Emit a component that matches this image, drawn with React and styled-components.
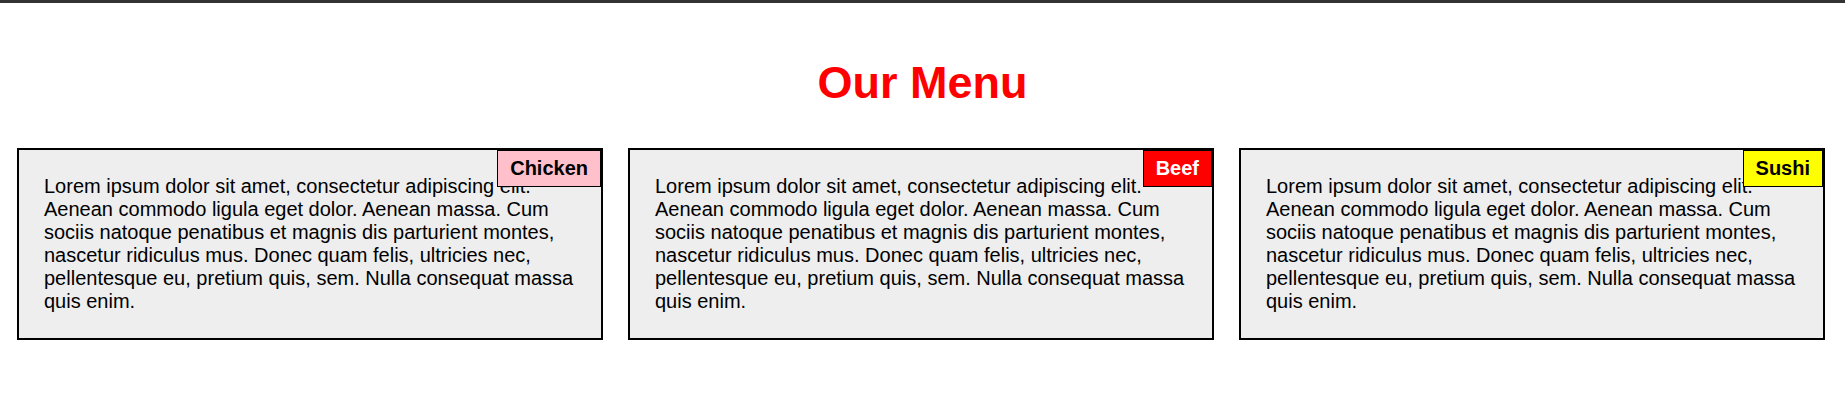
import React from "react";
import styled, { createGlobalStyle } from "styled-components";

const GlobalStyle = createGlobalStyle`
  html, body {
    margin: 0;
    padding: 0;
    background: #ffffff;
    font-family: "Liberation Sans", Arial, sans-serif;
  }
`;

const TopBar = styled.div`
  height: 3px;
  background: #333333;
`;

const Page = styled.main`
  display: flex;
  flex-direction: column;
`;

const Title = styled.h1`
  margin: 54px 0 40px;
  text-align: center;
  color: #ff0000;
  font-size: 45px;
  font-weight: 700;
  line-height: 51px;
`;

const CardRow = styled.section`
  display: grid;
  grid-template-columns: repeat(3, 1fr);
  gap: 25px;
  padding: 0 20px 0 17px;
`;

const Card = styled.article`
  position: relative;
  background: #eeeeee;
  border: 2px solid #000000;
  padding: 25px;
`;

const Badge = styled.span`
  position: absolute;
  top: 0;
  right: 0;
  background: ${(p) => p.$bg};
  color: ${(p) => p.$fg};
  border: 1px solid #000000;
  padding: 6px 12px;
  font-size: 20px;
  font-weight: 700;
  line-height: 23px;
`;

const Text = styled.p`
  margin: 0;
  font-size: 20px;
  line-height: 23px;
  color: #000000;
`;

const LOREM =
  "Lorem ipsum dolor sit amet, consectetur adipiscing elit. Aenean commodo ligula eget dolor. Aenean massa. Cum sociis natoque penatibus et magnis dis parturient montes, nascetur ridiculus mus. Donec quam felis, ultricies nec, pellentesque eu, pretium quis, sem. Nulla consequat massa quis enim.";

const items = [
  { name: "Chicken", bg: "#ffc0cb", fg: "#000000" },
  { name: "Beef", bg: "#ff0000", fg: "#ffffff" },
  { name: "Sushi", bg: "#ffff00", fg: "#000000" },
];

export default function App() {
  return (
    <>
      <GlobalStyle />
      <TopBar />
      <Page>
        <Title>Our Menu</Title>
        <CardRow>
          {items.map((it) => (
            <Card key={it.name}>
              <Badge $bg={it.bg} $fg={it.fg}>
                {it.name}
              </Badge>
              <Text>{LOREM}</Text>
            </Card>
          ))}
        </CardRow>
      </Page>
    </>
  );
}
